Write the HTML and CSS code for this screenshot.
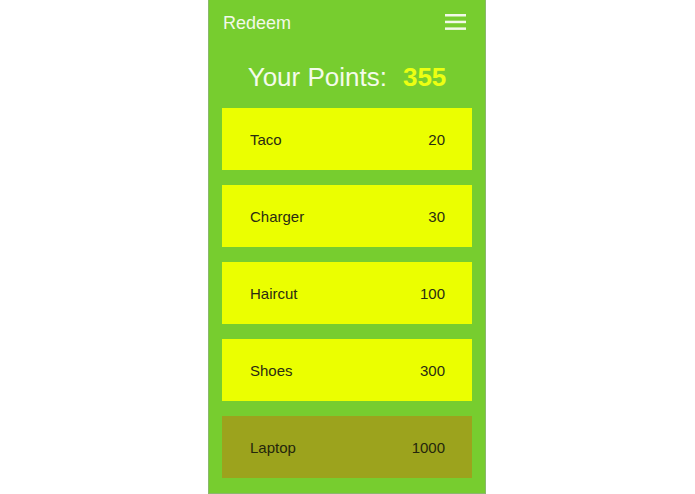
FILE: index.html
```
<!DOCTYPE html>
<html lang="en">
<head>
<meta charset="utf-8">
<title>Redeem</title>
<link rel="stylesheet" href="styles.css">
</head>
<body>
<div class="phone">
  <header class="topbar">
    <span class="title">Redeem</span>
    <svg class="menu" width="21" height="17" viewBox="0 0 21 17" aria-hidden="true">
      <rect x="0" y="0" width="21" height="2.5" fill="#f2f9e8"/>
      <rect x="0" y="6.7" width="21" height="2.5" fill="#f2f9e8"/>
      <rect x="0" y="13.4" width="21" height="2.5" fill="#f2f9e8"/>
    </svg>
  </header>
  <div class="points"><span class="points-label">Your Points:</span><span class="points-value">355</span></div>
  <ul class="rewards">
    <li class="reward"><span>Taco</span><span>20</span></li>
    <li class="reward"><span>Charger</span><span>30</span></li>
    <li class="reward"><span>Haircut</span><span>100</span></li>
    <li class="reward"><span>Shoes</span><span>300</span></li>
    <li class="reward locked"><span>Laptop</span><span>1000</span></li>
  </ul>
</div>
</body>
</html>
```
FILE: styles.css
```
html, body {
  margin: 0;
  padding: 0;
  background: #ffffff;
}

body {
  font-family: "Liberation Sans", Arial, sans-serif;
}

.phone {
  width: 276px;
  margin: 0 0 0 208px;
  height: 493px;
  background: #77cd2f;
  border-left: 1px solid #8ab86c;
  border-right: 1px solid #8ab86c;
  border-bottom: 1px solid #8ab86c;
}

.topbar {
  height: 46px;
  display: flex;
  align-items: center;
  justify-content: space-between;
  padding: 0 19px 0 14px;
}

.title {
  font-size: 18px;
  line-height: 46px;
  color: #f2f9e8;
}

.menu {
  display: block;
  margin-bottom: 2px;
}

.points {
  height: 62px;
  line-height: 62px;
  text-align: center;
  font-size: 26px;
  color: #f4fbea;
}

.points-value {
  margin-left: 16px;
  font-weight: bold;
  color: #ecff12;
}

.rewards {
  list-style: none;
  margin: 0;
  padding: 0 13px 0 13px;
  display: flex;
  flex-direction: column;
  gap: 15px;
}

.reward {
  height: 62px;
  display: flex;
  align-items: center;
  justify-content: space-between;
  padding: 0 27px 0 28px;
  background: #ebff00;
  color: #2a2c12;
  font-size: 15px;
}

.reward.locked {
  background: #9ca31d;
  color: #24260c;
}
```
